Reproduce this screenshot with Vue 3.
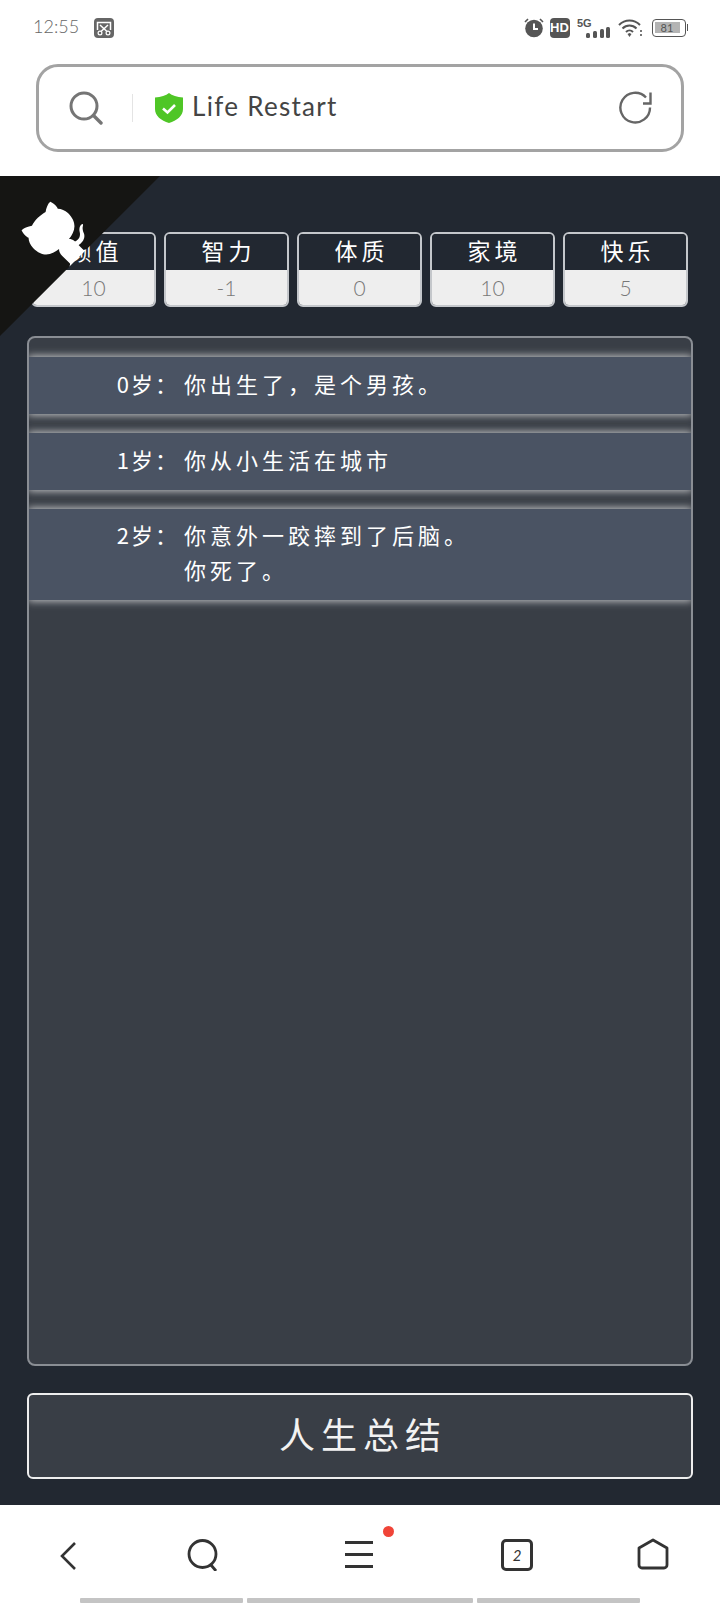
<script setup>
const stats = [
  { label: '颜值', value: '10' },
  { label: '智力', value: '-1' },
  { label: '体质', value: '0' },
  { label: '家境', value: '10' },
  { label: '快乐', value: '5' },
]
const rows = [
  { age: '0岁：', lines: ['你出生了，是个男孩。'] },
  { age: '1岁：', lines: ['你从小生活在城市'] },
  { age: '2岁：', lines: ['你意外一跤摔到了后脑。', '你死了。'] },
]
</script>

<template>
  <div class="phone">
    <header class="status">
      <div class="status-left">
        <span class="time">12:55</span>
        <svg class="shot" width="20" height="20" viewBox="0 0 20 20">
          <rect width="20" height="20" rx="4" fill="#666" />
          <path d="M3.500 12V4.500h13V12" fill="none" stroke="#fff" stroke-width="1.500" />
          <path d="M6 7l7.500 7M14 7l-7.500 7" stroke="#fff" stroke-width="1.500" />
          <circle cx="6" cy="15" r="1.900" fill="#666" stroke="#fff" stroke-width="1.200" />
          <circle cx="14" cy="15" r="1.900" fill="#666" stroke="#fff" stroke-width="1.200" />
        </svg>
      </div>
      <div class="status-right">
        <svg width="20" height="21" viewBox="0 0 20 21">
          <circle cx="10" cy="11.500" r="8.800" fill="#555" />
          <path d="M10 6.500v5.500h4" fill="none" stroke="#fff" stroke-width="2" />
          <path d="M1 5l3-3M19 5l-3-3" stroke="#555" stroke-width="1.600" />
        </svg>
        <span class="hd">HD</span>
        <svg class="sig" width="33" height="20" viewBox="0 0 33 20">
          <text x="0" y="9" class="fiveg">5G</text>
          <rect x="9" y="15" width="4" height="5" rx="1.500" fill="#555" />
          <rect x="16" y="13" width="4" height="7" rx="1.500" fill="#555" />
          <rect x="23" y="11" width="4" height="9" rx="1.500" fill="#555" />
          <rect x="29" y="9" width="4" height="11" rx="1.500" fill="#555" />
        </svg>
        <svg class="wifi" width="25" height="20" viewBox="0 0 25 20">
          <path d="M1 7c6-6 15-6 21 0M4.500 10.500c4-4 10-4 14 0M8 14c2-2 5-2 7 0" fill="none" stroke="#555" stroke-width="2" />
          <path d="M9.500 16l2-1 2 1-2 3z" fill="#555" />
          <path d="M23 12v2M23 16v2" stroke="#555" stroke-width="1.600" />
        </svg>
        <div class="battery">
          <div class="battery-body"><span class="battery-fill">81</span></div>
          <span class="battery-tip"></span>
        </div>
      </div>
    </header>

    <div class="address-wrap">
      <div class="address">
        <svg class="addr-search" width="34" height="34" viewBox="0 0 34 34">
          <circle cx="15" cy="15" r="13" fill="none" stroke="#757575" stroke-width="3" />
          <path d="M24.500 24.500L32 32" stroke="#757575" stroke-width="3.400" stroke-linecap="round" />
        </svg>
        <span class="addr-sep"></span>
        <svg width="28" height="30" viewBox="0 0 28 30">
          <path d="M14 0c3 2.500 8 4 14 4.500V16c0 7-6 11.500-14 14C6 27.500 0 23 0 16V4.500C6 4 11 2.500 14 0z" fill="#4fc626" />
          <path d="M8 15.500l4.500 4L20 12" fill="none" stroke="#fff" stroke-width="2.600" />
        </svg>
        <span class="addr-title">Life Restart</span>
        <svg class="addr-reload" width="34" height="34" viewBox="0 0 34 34">
          <path d="M31 16.500A14.800 14.800 0 1 1 27 6.500" fill="none" stroke="#666" stroke-width="2.400" />
          <path d="M31.500 1.500v11H24" fill="none" stroke="#666" stroke-width="2.400" />
        </svg>
      </div>
    </div>

    <main class="game">
      <svg class="corner" width="160" height="160" viewBox="0 0 250 250">
        <g transform="translate(250 0) scale(-1 1)">
          <path d="M0,0 L115,115 L130,115 L142,142 L250,250 L250,0 Z" fill="#151513" />
          <path d="M128.3,109.0 C113.8,99.7 119.0,89.6 119.0,89.6 C122.0,82.7 120.5,78.6 120.5,78.6 C119.2,72.0 123.4,76.3 123.4,76.3 C127.3,80.9 125.5,87.3 125.5,87.3 C122.9,97.6 130.6,101.9 134.4,103.2" fill="#fff" />
          <path d="M115.0,115.0 C114.9,115.1 118.7,116.5 119.8,115.4 L133.7,101.6 C136.9,99.2 139.9,98.4 142.2,98.6 C133.8,88.0 127.5,74.4 143.8,58.0 C148.5,53.4 154.0,51.2 159.7,51.0 C160.3,49.4 163.2,43.6 171.4,40.1 C171.4,40.1 176.1,42.5 178.8,56.2 C183.1,58.6 187.2,61.8 190.9,65.4 C194.5,69.0 197.7,73.2 200.1,77.6 C213.8,80.2 216.3,84.9 216.3,84.9 C212.7,93.1 206.9,96.0 205.4,96.6 C205.1,102.4 203.0,107.8 198.3,112.5 C181.9,128.9 168.3,122.5 157.7,114.1 C157.9,116.9 156.7,120.9 152.7,124.9 L141.0,136.5 C139.8,137.7 141.6,141.9 141.8,141.8 Z" fill="#fff" />
        </g>
      </svg>

      <section class="stats">
        <div v-for="s in stats" :key="s.label" class="stat">
          <div class="stat-label">{{ s.label }}</div>
          <div class="stat-value">{{ s.value }}</div>
        </div>
      </section>

      <section class="panel">
        <div v-for="r in rows" :key="r.age" class="row">
          <span class="age">{{ r.age }}</span>
          <div class="story">
            <div v-for="l in r.lines" :key="l">{{ l }}</div>
          </div>
        </div>
      </section>

      <button class="summary">人生总结</button>
    </main>

    <nav class="toolbar">
      <svg class="t-back" width="18" height="30" viewBox="0 0 18 30">
        <path d="M16 2L3 15l13 13" fill="none" stroke="#333" stroke-width="2.600" />
      </svg>
      <svg class="t-search" width="32" height="32" viewBox="0 0 32 32">
        <circle cx="15.500" cy="15" r="13.500" fill="none" stroke="#333" stroke-width="2.800" />
        <path d="M24 26l5 6" stroke="#333" stroke-width="2.800" />
      </svg>
      <div class="t-menu">
        <span></span><span></span><span></span>
        <i class="dot"></i>
      </div>
      <div class="t-tabs">2</div>
      <svg class="t-home" width="32" height="32" viewBox="0 0 32 32">
        <path d="M16 2l14 8v17a3 3 0 0 1-3 3H5a3 3 0 0 1-3-3V10z" fill="none" stroke="#333" stroke-width="2.800" stroke-linejoin="round" />
      </svg>
    </nav>
    <div class="handle">
      <span class="h1"></span><span class="h2"></span><span class="h3"></span>
    </div>
  </div>
</template>

<style>
html, body { margin: 0; background: #fff; }
</style>

<style scoped>
.phone {
  width: 720px;
  height: 1605px;
  display: flex;
  flex-direction: column;
  background: #fff;
  overflow: hidden;
  font-family: "Noto Sans CJK SC", "Noto Sans", sans-serif;
}

/* status bar */
.status {
  height: 64px;
  flex: none;
  display: flex;
  justify-content: space-between;
  align-items: flex-start;
  padding: 17px 32px 0 33px;
  box-sizing: border-box;
}
.status-left { display: flex; align-items: center; gap: 15px; height: 21px; }
.time { font: 300 18px/19px Lato, sans-serif; color: #666; width: 46px; margin-top: -2px; }
.status-right { display: flex; align-items: center; gap: 6px; height: 21px; }
.sig { margin-left: 1px; }
.wifi { margin-left: 2px; }
.fiveg { font: 700 11px "Liberation Sans", sans-serif; fill: #555; }
.hd {
  width: 20px; height: 20px; border-radius: 4px;
  background: #555; color: #fff;
  font: 700 13px/20px "Liberation Sans", sans-serif;
  text-align: center;
}
.battery { display: flex; align-items: center; gap: 1px; margin-left: 3px; }
.battery-body {
  width: 34px; height: 18px; box-sizing: border-box;
  border: 1.500px solid #555; border-radius: 4px; padding: 2px;
}
.battery-fill {
  display: block; height: 11px; width: 25px;
  background: #b4b4b4; color: #555;
  font: 400 11px/11px Lato, sans-serif; text-align: center;
}
.battery-tip { width: 1.500px; height: 7px; background: #555; }

/* address bar */
.address-wrap { height: 112px; flex: none; }
.address {
  width: 648px; height: 88px; margin-left: 36px;
  box-sizing: border-box;
  border: 3px solid #a3a3a3; border-radius: 22px;
  display: flex; align-items: center;
  padding: 0 28px 0 30px;
}
.addr-search { flex: none; }
.addr-sep { width: 1px; height: 28px; background: #e4e4e4; margin: 0 22px 0 29px; }
.addr-title {
  font: 400 26px/1 Lato, sans-serif;
  color: #444; letter-spacing: 1.300px; margin-left: 9px;
  padding-bottom: 5px;
}
.addr-reload { margin-left: auto; }

/* game area */
.game {
  position: relative;
  height: 1329px;
  flex: none;
  background: #222831;
  padding: 56px 27px 0;
  box-sizing: border-box;
  display: flex;
  flex-direction: column;
}
.corner { position: absolute; left: 0; top: 0; z-index: 2; }
.stats {
  display: grid;
  grid-template-columns: repeat(5, 125px);
  gap: 8px;
  margin-left: 4px;
  height: 75px;
}
.stat {
  border: 2px solid #c4c7cb; border-radius: 6px;
  overflow: hidden; box-sizing: border-box;
  display: flex; flex-direction: column;
}
.stat-label {
  height: 36px; flex: none;
  background: #222831; color: #fff;
  font-size: 23px; line-height: 32px; font-weight: 400;
  text-align: center; letter-spacing: 4px; text-indent: 4px;
}
.stat-value {
  flex: 1;
  background: #eeeeee; color: #777;
  font: 300 21px/35px Lato, sans-serif;
  text-align: center;
}
.panel {
  margin-top: 29px;
  height: 1030px;
  flex: none;
  box-sizing: border-box;
  border: 2px solid #8a8e94;
  border-radius: 8px;
  background: #393e46;
  padding-top: 19px;
  display: flex; flex-direction: column; gap: 19px;
  overflow: hidden;
}
.row {
  background: #4a5363;
  box-shadow: 0 0 8px 1px #c8cacc;
  display: flex;
  padding: 11px 0 15px;
  color: #fff;
  font-size: 22px; line-height: 31px; font-weight: 400;
  letter-spacing: 4px;
}
.row:last-child { line-height: 35px; padding: 8px 0 13px; }
.age { width: 150px; flex: none; text-align: right; letter-spacing: 2px; }
.story { margin-left: 5px; }

.summary {
  margin-top: 27px;
  height: 86px;
  width: 666px;
  flex: none;
  box-sizing: border-box;
  border: 2px solid #eeeeee; border-radius: 6px;
  background: #393e46; color: #f2f2f2;
  font-family: inherit; font-size: 36px; font-weight: 400; letter-spacing: 6px; text-indent: 6px;
  padding: 0 0 6px;
}

/* bottom toolbar */
.toolbar {
  position: relative;
  height: 90px;
  flex: none;
}
.toolbar > * { position: absolute; box-sizing: border-box; }
.t-back { left: 59px; top: 36px; }
.t-search { left: 187px; top: 34px; }
.t-home { left: 637px; top: 33px; }
.t-menu { left: 345px; top: 36px; width: 28px; height: 27px; display: flex; flex-direction: column; justify-content: space-between; }
.t-menu span { display: block; height: 3px; background: #333; }
.dot { position: absolute; left: 38px; top: -15px; width: 11px; height: 11px; border-radius: 50%; background: #f04438; }
.t-tabs {
  left: 501px; top: 34px; width: 32px; height: 32px;
  border: 3px solid #333; border-radius: 5px;
  font: italic 400 15px/26px Lato, sans-serif; color: #333; text-align: center;
}
.handle { position: relative; height: 10px; flex: none; }
.handle span { position: absolute; top: 3px; height: 5px; background: #c4c4c4; border-radius: 1px; }
.h1 { left: 80px; width: 163px; }
.h2 { left: 247px; width: 226px; }
.h3 { left: 477px; width: 163px; }
</style>
